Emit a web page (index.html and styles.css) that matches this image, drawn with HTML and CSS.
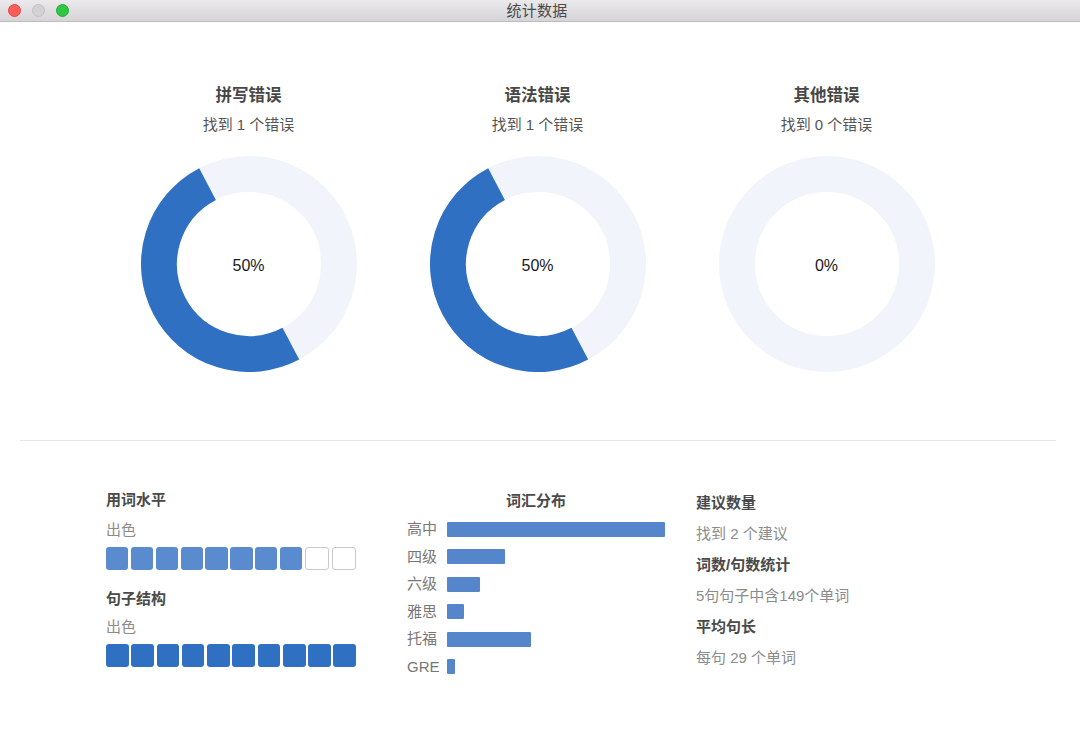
FILE: index.html
```html
<!DOCTYPE html>
<html lang="zh-CN">
<head>
<meta charset="utf-8">
<title>统计数据</title>
<link rel="stylesheet" href="styles.css">
</head>
<body>
<div class="window">
  <header class="titlebar">
    <div class="lights">
      <span class="light red"></span>
      <span class="light gray"></span>
      <span class="light green"></span>
    </div>
    <div class="title">统计数据</div>
    <div></div>
  </header>

  <section class="charts">
    <div class="chart">
      <div class="chart-title">拼写错误</div>
      <div class="chart-sub">找到 1 个错误</div>
      <div class="donut">
        <svg viewBox="0 0 216 216" width="216" height="216">
          <circle class="ring-bg" cx="108" cy="108" r="90"/>
          <circle class="ring-fg" cx="108" cy="108" r="90" stroke-dasharray="282.74 565.49" transform="rotate(62.3 108 108)"/>
        </svg>
        <span class="pct">50%</span>
      </div>
    </div>
    <div class="chart">
      <div class="chart-title">语法错误</div>
      <div class="chart-sub">找到 1 个错误</div>
      <div class="donut">
        <svg viewBox="0 0 216 216" width="216" height="216">
          <circle class="ring-bg" cx="108" cy="108" r="90"/>
          <circle class="ring-fg" cx="108" cy="108" r="90" stroke-dasharray="282.74 565.49" transform="rotate(62.3 108 108)"/>
        </svg>
        <span class="pct">50%</span>
      </div>
    </div>
    <div class="chart">
      <div class="chart-title">其他错误</div>
      <div class="chart-sub">找到 0 个错误</div>
      <div class="donut">
        <svg viewBox="0 0 216 216" width="216" height="216">
          <circle class="ring-bg" cx="108" cy="108" r="90"/>
        </svg>
        <span class="pct">0%</span>
      </div>
    </div>
  </section>

  <hr class="divider">

  <section class="stats">
    <div class="col-level">
      <div class="stat-title">用词水平</div>
      <div class="level-label">出色</div>
      <div class="squares light-fill">
        <span class="sq on"></span><span class="sq on"></span><span class="sq on"></span><span class="sq on"></span><span class="sq on"></span><span class="sq on"></span><span class="sq on"></span><span class="sq on"></span><span class="sq off"></span><span class="sq off"></span>
      </div>
      <div class="stat-title second">句子结构</div>
      <div class="level-label tight">出色</div>
      <div class="squares dark-fill">
        <span class="sq on"></span><span class="sq on"></span><span class="sq on"></span><span class="sq on"></span><span class="sq on"></span><span class="sq on"></span><span class="sq on"></span><span class="sq on"></span><span class="sq on"></span><span class="sq on"></span>
      </div>
    </div>

    <div class="col-vocab">
      <div class="stat-title center">词汇分布</div>
      <div class="bars">
        <div class="bar-row"><span class="bar-label">高中</span><span class="bar" style="width:217.7px"></span></div>
        <div class="bar-row"><span class="bar-label">四级</span><span class="bar" style="width:57.7px"></span></div>
        <div class="bar-row"><span class="bar-label">六级</span><span class="bar" style="width:33.4px"></span></div>
        <div class="bar-row"><span class="bar-label">雅思</span><span class="bar" style="width:16.7px"></span></div>
        <div class="bar-row"><span class="bar-label">托福</span><span class="bar" style="width:84px"></span></div>
        <div class="bar-row"><span class="bar-label">GRE</span><span class="bar" style="width:8.4px"></span></div>
      </div>
    </div>

    <div class="col-info">
      <div class="info-title">建议数量</div>
      <div class="info-text">找到 2 个建议</div>
      <div class="info-title">词数/句数统计</div>
      <div class="info-text">5句句子中含149个单词</div>
      <div class="info-title">平均句长</div>
      <div class="info-text">每句 29 个单词</div>
    </div>
  </section>
</div>
</body>
</html>
```

FILE: styles.css
```css
* { box-sizing: border-box; }

html, body {
  margin: 0;
  padding: 0;
  background: #ffffff;
}

body {
  font-family: "Liberation Sans", "Noto Sans CJK SC", sans-serif;
  width: 1080px;
  height: 755px;
  overflow: hidden;
}

.window {
  width: 1080px;
  height: 755px;
  background: #ffffff;
}

/* title bar */
.titlebar {
  height: 22px;
  display: grid;
  grid-template-columns: 1fr auto 1fr;
  align-items: center;
  padding-right: 6px;
  background: linear-gradient(to bottom, #ebe9eb 0%, #d6d4d6 100%);
  border-bottom: 1px solid #bdbbbd;
}

.lights {
  display: flex;
  gap: 11px;
  padding-left: 8px;
  align-items: center;
}

.light {
  width: 13px;
  height: 13px;
  border-radius: 50%;
  display: block;
}
.light.red { background: #fc5e57; border: 1px solid #e3463f; }
.light.gray { background: #d3d1d3; border: 1px solid #c2c0c2; }
.light.green { background: #2fc745; border: 1px solid #22ad35; }

.title {
  font-size: 15px;
  color: #4a4a4a;
  line-height: 21px;
  letter-spacing: 0.3px;
}

/* donut charts */
.charts {
  display: flex;
  padding-left: 104px;
  padding-top: 62px;
}

.chart {
  width: 289px;
  display: flex;
  flex-direction: column;
  align-items: center;
}

.chart-title {
  font-size: 16.5px;
  font-weight: bold;
  color: #474747;
  line-height: 22px;
}

.chart-sub {
  font-size: 15px;
  color: #555555;
  line-height: 22px;
  margin-top: 7.5px;
}

.donut {
  position: relative;
  width: 216px;
  height: 216px;
  margin-top: 20.5px;
}

.donut svg { display: block; }

.ring-bg {
  fill: none;
  stroke: #f1f5fb;
  stroke-width: 36;
}

.ring-fg {
  fill: none;
  stroke: #3070c3;
  stroke-width: 36;
}

.pct {
  position: absolute;
  left: 0;
  right: 0;
  top: 100px;
  text-align: center;
  font-family: "Liberation Sans", sans-serif;
  font-size: 16px;
  line-height: 20px;
  color: #1a1a1a;
}

.divider {
  border: 0;
  border-top: 1px solid #e6e6e6;
  height: 0;
  margin: 68px 24px 0 20px;
}

/* bottom stats */
.stats {
  display: flex;
  align-items: flex-start;
  padding-left: 106px;
  padding-top: 46px;
}

.stat-title {
  font-size: 15px;
  font-weight: bold;
  color: #4a4a4a;
  line-height: 22px;
}

.stat-title.center { text-align: center; }
.stat-title.second { margin-top: 18.5px; }

.col-level {
  width: 250px;
  padding-top: 2px;
}

.level-label {
  font-size: 15px;
  color: #8c8c8c;
  line-height: 22px;
  margin-top: 8px;
}
.level-label.tight { margin-top: 5.5px; }

.squares {
  display: flex;
  gap: 2.6px;
  margin-top: 5.5px;
}
.squares.dark-fill { margin-top: 6.5px; }

.sq {
  flex: 1;
  height: 23px;
  border-radius: 3px;
  display: block;
}

.light-fill .sq.on { background: #5a8bcf; }
.dark-fill .sq.on { background: #3070c3; }
.sq.off { background: #ffffff; border: 1px solid #c9c9c9; }

.col-vocab {
  width: 258px;
  margin-left: 51px;
  padding-top: 3px;
}

.bars {
  margin-top: 3.5px;
}

.bar-row {
  display: flex;
  align-items: center;
  height: 27.5px;
}

.bar-label {
  width: 40px;
  font-size: 15px;
  color: #777777;
  line-height: 20px;
}

.bar {
  display: block;
  height: 15px;
  background: #5586cb;
  border-radius: 1px;
}

.col-info {
  margin-left: 31px;
}

.info-title {
  font-size: 15px;
  font-weight: bold;
  color: #4a4a4a;
  line-height: 31px;
}

.info-text {
  font-size: 15px;
  color: #8c8c8c;
  line-height: 31px;
}
```
